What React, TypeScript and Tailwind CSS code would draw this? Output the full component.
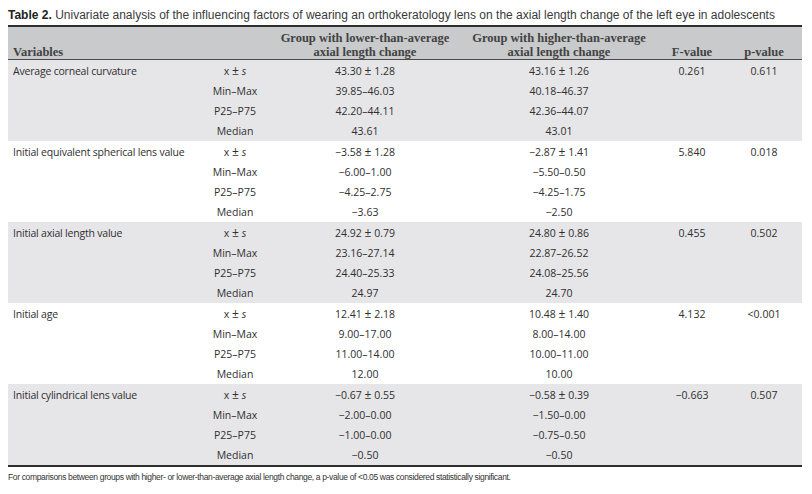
import React from "react";

type Group = {
  variable: string;
  gray: boolean;
  rows: [string, string][];
  f: string;
  p: string;
};

const groups: Group[] = [
  {
    variable: "Average corneal curvature",
    gray: true,
    rows: [
      ["43.30 ± 1.28", "43.16 ± 1.26"],
      ["39.85–46.03", "40.18–46.37"],
      ["42.20–44.11", "42.36–44.07"],
      ["43.61", "43.01"],
    ],
    f: "0.261",
    p: "0.611",
  },
  {
    variable: "Initial equivalent spherical lens value",
    gray: false,
    rows: [
      ["−3.58 ± 1.28", "−2.87 ± 1.41"],
      ["−6.00–1.00", "−5.50–0.50"],
      ["−4.25–2.75", "−4.25–1.75"],
      ["−3.63", "−2.50"],
    ],
    f: "5.840",
    p: "0.018",
  },
  {
    variable: "Initial axial length value",
    gray: true,
    rows: [
      ["24.92 ± 0.79", "24.80 ± 0.86"],
      ["23.16–27.14", "22.87–26.52"],
      ["24.40–25.33", "24.08–25.56"],
      ["24.97", "24.70"],
    ],
    f: "0.455",
    p: "0.502",
  },
  {
    variable: "Initial age",
    gray: false,
    rows: [
      ["12.41 ± 2.18", "10.48 ± 1.40"],
      ["9.00–17.00", "8.00–14.00"],
      ["11.00–14.00", "10.00–11.00"],
      ["12.00", "10.00"],
    ],
    f: "4.132",
    p: "<0.001",
  },
  {
    variable: "Initial cylindrical lens value",
    gray: true,
    rows: [
      ["−0.67 ± 0.55", "−0.58 ± 0.39"],
      ["−2.00–0.00", "−1.50–0.00"],
      ["−1.00–0.00", "−0.75–0.50"],
      ["−0.50", "−0.50"],
    ],
    f: "−0.663",
    p: "0.507",
  },
];

const statLabels = ["x ± s", "Min–Max", "P25–P75", "Median"];

const cols = "grid grid-cols-[192px_70px_190px_198px_68px_76px]";

// make the ± sign a touch bigger, like the printed table
const Value = ({ text }: { text: string }) => {
  const parts = text.split("±");
  if (parts.length === 1) return <span>{text}</span>;
  return (
    <span>
      {parts[0]}
      <span className="text-[12px] leading-none">±</span>
      {parts[1]}
    </span>
  );
};

const StatLabel = ({ label }: { label: string }) => {
  if (label === "x ± s") {
    return (
      <span>
        x <span className="text-[12px] leading-none">±</span>{" "}
        <span className="italic">s</span>
      </span>
    );
  }
  return <span>{label}</span>;
};

export default function App() {
  return (
    <div className="w-[812px] h-[494px] bg-white text-[#333]">
      <div className="h-[25px] pl-[8px] pt-[7px] text-[12px] leading-[16px] font-['Liberation_Sans',Arial,sans-serif] text-[#3a3a3a]">
        <span className="font-bold text-[#222]">Table 2.</span> Univariate
        analysis of the influencing factors of wearing an orthokeratology lens
        on the axial length change of the left eye in adolescents
      </div>

      <div className="ml-[8px] w-[794px]">
        <div
          className={`${cols} h-[35px] items-end bg-[#c9cacc] border-t-2 border-b border-t-[#2e2e2e] border-b-[#4a4a4a] font-['Liberation_Serif',serif] font-bold text-[12.5px] leading-[14px] text-[#424242]`}
        >
          <div className="pl-[5px]">Variables</div>
          <div />
          <div className="text-center">
            Group with lower-than-average
            <br />
            axial length change
          </div>
          <div className="text-center">
            Group with higher-than-average
            <br />
            axial length change
          </div>
          <div className="text-center">F-value</div>
          <div className="text-center">p-value</div>
        </div>

        {groups.map((g) => (
          <div
            key={g.variable}
            className={`${g.gray ? "bg-[#e6e6e8]" : "bg-white"} pt-[2px] h-[81px] font-['Open_Sans',sans-serif] text-[10.5px] text-[#2f2f2f]`}
          >
            {g.rows.map((r, i) => (
              <div key={i} className={`${cols} h-5 items-center`}>
                <div className="pl-[5px] tracking-[-0.2px]">
                  {i === 0 ? g.variable : ""}
                </div>
                <div className="text-center">
                  <StatLabel label={statLabels[i]} />
                </div>
                <div className="text-center">
                  <Value text={r[0]} />
                </div>
                <div className="text-center">
                  <Value text={r[1]} />
                </div>
                <div className="text-center">{i === 0 ? g.f : ""}</div>
                <div className="text-center">{i === 0 ? g.p : ""}</div>
              </div>
            ))}
          </div>
        ))}

        <div className="border-t-2 border-[#2e2e2e]" />
      </div>

      <div className="pl-[8px] pt-[4px] font-['Liberation_Sans',Arial,sans-serif] text-[8.5px] tracking-[-0.35px] text-[#333]">
        For comparisons between groups with higher- or lower-than-average axial
        length change, a p-value of &lt;0.05 was considered statistically
        significant.
      </div>
    </div>
  );
}
